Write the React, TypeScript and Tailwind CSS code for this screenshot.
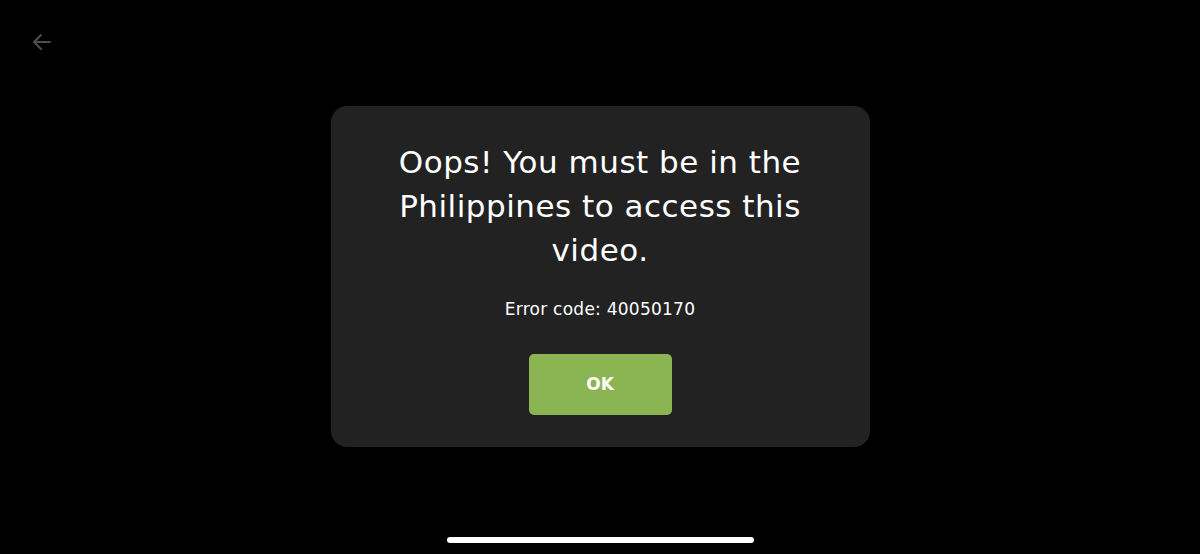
import React from 'react';

export default function App() {
  return (
    <div
      className="relative w-[1200px] h-[554px] bg-black flex flex-col items-center overflow-hidden"
      style={{ fontFamily: '"DejaVu Sans", "Open Sans", sans-serif' }}
    >
      <button className="absolute left-[30px] top-[30px] text-[#4d4d4d]">
        <svg width="24" height="24" viewBox="0 0 24 24" fill="none" stroke="currentColor" strokeWidth="2" strokeLinecap="round" strokeLinejoin="round">
          <path d="M20 12H4" />
          <path d="M11 5l-7 7 7 7" />
        </svg>
      </button>

      <div className="mt-[106px] w-[539px] h-[341px] rounded-[16px] bg-[#222222] flex flex-col items-center pt-[34px]">
        <h1 className="text-white text-[31px] leading-[44px] tracking-[0.5px] text-center w-[440px] font-normal">
          Oops! You must be in the Philippines to access this video.
        </h1>
        <p className="mt-[25px] text-white text-[17px] leading-[24px] tracking-[0.25px]">Error code: 40050170</p>
        <button className="mt-[33px] w-[143px] h-[61px] rounded-[5px] bg-[#8bb552] text-white font-bold text-[17px]">
          OK
        </button>
      </div>

      <div className="absolute bottom-[11px] left-[447px] w-[307px] h-[6px] rounded-full bg-white" />
    </div>
  );
}
